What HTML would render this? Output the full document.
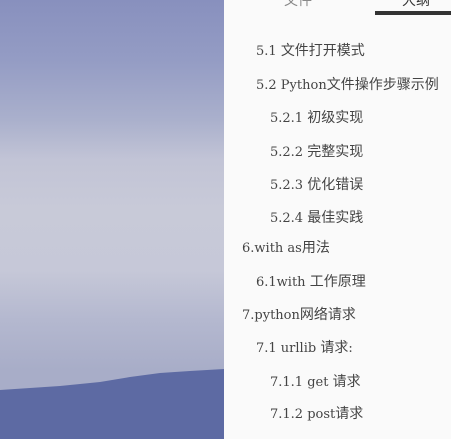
<!DOCTYPE html>
<html><head><meta charset="utf-8"><style>
html,body{margin:0;padding:0;width:451px;height:439px;overflow:hidden;}
body{position:relative;background:#fafafa;}
#bg{position:absolute;left:0;top:0;width:224px;height:439px;
background:linear-gradient(to bottom,#8890be 0px,#949cc4 60px,#aab0cc 120px,#c2c4d6 160px,#c8cad8 210px,#c6c8d8 270px,#b4b8cf 320px,#a8adc8 370px,#a8adc8 439px);}
#hill{position:absolute;left:0;top:0;width:224px;height:439px;}
#panel{position:absolute;left:224px;top:0;width:227px;height:439px;background:#fafafa;}
.tab{position:absolute;top:-10px;font:14px "Liberation Serif","Noto Sans CJK SC",serif;color:#888;}
.bar{position:absolute;left:151px;top:11px;width:76px;height:4px;background:#333;}
.i{position:absolute;font:13px "DejaVu Serif","Noto Sans CJK SC",serif;color:#444;white-space:nowrap;line-height:16px;margin-top:-2px;}
.i b{font:14px "Noto Sans CJK SC",sans-serif;font-weight:normal;}
</style></head><body>
<div id="bg"></div>
<svg id="hill" viewBox="0 0 224 439"><path d="M0 390 L30 388 L60 386 L100 382 L130 377 L160 373 L190 371 L224 369 L224 439 L0 439Z" fill="#5d6aa3"/></svg>
<div id="panel">
<div class="tab" style="left:60px">文件</div>
<div class="tab" style="left:178px;color:#333">大纲</div>
<div class="bar"></div>
<div class="i" style="left:32px;top:42px">5.1 <b>文件打开模式</b></div>
<div class="i" style="left:32px;top:76px">5.2 Python<b>文件操作步骤示例</b></div>
<div class="i" style="left:46px;top:109px">5.2.1 <b>初级实现</b></div>
<div class="i" style="left:46px;top:143px">5.2.2 <b>完整实现</b></div>
<div class="i" style="left:46px;top:176px">5.2.3 <b>优化错误</b></div>
<div class="i" style="left:46px;top:209px">5.2.4 <b>最佳实践</b></div>
<div class="i" style="left:18px;top:239px">6.with as<b>用法</b></div>
<div class="i" style="left:32px;top:273px">6.1with <b>工作原理</b></div>
<div class="i" style="left:18px;top:306px">7.python<b>网络请求</b></div>
<div class="i" style="left:32px;top:339px">7.1 urllib <b>请求</b>:</div>
<div class="i" style="left:46px;top:373px">7.1.1 get <b>请求</b></div>
<div class="i" style="left:46px;top:405px">7.1.2 post<b>请求</b></div>
</div>
</body></html>
